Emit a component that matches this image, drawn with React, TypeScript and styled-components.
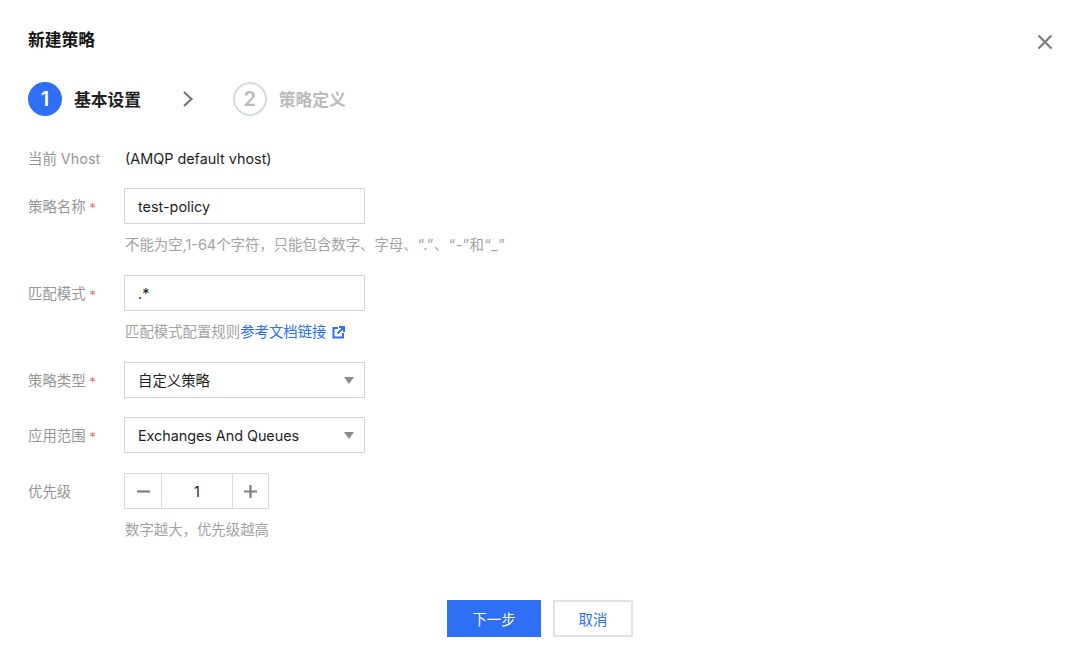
import { createGlobalStyle } from 'styled-components';
import styled from 'styled-components';

const GlobalStyle = createGlobalStyle`
  html, body {
    margin: 0;
    padding: 0;
    background: #fff;
  }
  body {
    font-family: Inter, "Noto Sans CJK SC", "Liberation Sans", sans-serif;
    font-size: 14.4px;
    color: #1f1f1f;
  }
  * {
    box-sizing: border-box;
  }
`;

const Dialog = styled.div`
  width: 1080px;
  height: 663px;
  padding: 28px 28px 0;
  display: flex;
  flex-direction: column;
  overflow: hidden;
`;

const Header = styled.div`
  height: 24px;
  display: flex;
  align-items: center;
  justify-content: space-between;
`;

const Title = styled.h2`
  margin: 0;
  font-size: 16.8px;
  font-weight: 700;
  line-height: 24px;
  color: #161616;
`;

const CloseButton = styled.button`
  width: 18px;
  height: 18px;
  margin-right: -2px;
  margin-top: 4px;
  padding: 0;
  border: none;
  background: none;
  color: #808080;
  display: flex;
`;

const Steps = styled.div`
  margin-top: 30px;
  height: 34px;
  display: flex;
  align-items: center;
`;

const StepCircle = styled.span<{ $active?: boolean }>`
  width: 34px;
  height: 34px;
  border-radius: 50%;
  display: flex;
  align-items: center;
  justify-content: center;
  font-size: 20px;
  font-weight: 600;
  color: ${p => (p.$active ? '#fff' : '#bbbbbb')};
  background: ${p => (p.$active ? '#2e6ff6' : '#fff')};
  border: ${p => (p.$active ? 'none' : '2px solid #d5dae4')};
`;

const StepName = styled.span<{ $active?: boolean }>`
  margin-left: 12px;
  font-size: 16.8px;
  font-weight: 600;
  color: ${p => (p.$active ? '#222' : '#bbbbbb')};
`;

const StepArrow = styled.span`
  margin: 0 37.5px 0 40px;
  display: flex;
  color: #777;
`;

const Form = styled.div`
  margin-top: 24px;
  display: flex;
  flex-direction: column;
`;

const Row = styled.div<{ $gap?: number }>`
  display: grid;
  grid-template-columns: 96px 241px;
  margin-top: ${p => p.$gap ?? 0}px;
`;

const Label = styled.div`
  height: 36px;
  padding-top: 1px;
  line-height: 36px;
  color: #969696;
  white-space: nowrap;
`;

const Required = styled.span`
  margin-left: 4px;
  font-size: 12.5px;
  color: #e86a6a;
  position: relative;
  top: 1px;
`;

const Control = styled.div`
  display: flex;
  flex-direction: column;
`;

const Value = styled.div`
  height: 36px;
  padding: 1px 0 0 1px;
  line-height: 36px;
  color: #1f1f1f;
  white-space: nowrap;
`;

const Field = styled.div`
  height: 36px;
  padding: 0 13px;
  border: 1px solid #ced4e0;
  background: #fff;
  display: flex;
  align-items: center;
  justify-content: space-between;
  color: #1f1f1f;
  white-space: nowrap;
`;

const CjkText = styled.span`
  margin-bottom: 2px;
`;

const LatinText = styled.span`
  letter-spacing: -0.05px;
`;

const Caret = styled.span`
  width: 0;
  height: 0;
  margin-right: -3px;
  border-left: 5.5px solid transparent;
  border-right: 5.5px solid transparent;
  border-top: 7px solid #8c8c8c;
`;

const Help = styled.div`
  margin-top: 10px;
  height: 22px;
  padding-left: 1px;
  line-height: 22px;
  color: #a3a3a3;
  white-space: nowrap;
`;

const Quoted = styled.span`
  letter-spacing: 0.5px;
`;

const DocLink = styled.a`
  color: #2e6ff6;
  text-decoration: none;
  display: inline-flex;
  align-items: center;
  gap: 5px;
`;

const Stepper = styled.div`
  width: 145px;
  height: 36px;
  display: grid;
  grid-template-columns: 36px 1fr 35px;
  border: 1px solid #d5dae4;
`;

const StepperButton = styled.div`
  display: flex;
  align-items: center;
  justify-content: center;
  color: #7f7f7f;
`;

const StepperValue = styled.div`
  display: flex;
  align-items: center;
  justify-content: center;
  border-left: 1px solid #d5dae4;
  border-right: 1px solid #d5dae4;
  color: #1f1f1f;
`;

const Footer = styled.div`
  margin-top: 59px;
  display: flex;
  justify-content: center;
  gap: 12px;
`;

const Button = styled.button<{ $primary?: boolean }>`
  height: 37px;
  width: ${p => (p.$primary ? 94 : 80)}px;
  padding: 0;
  font: inherit;
  color: ${p => (p.$primary ? '#fff' : '#2e6ff6')};
  background: ${p => (p.$primary ? '#2e6ff6' : '#fff')};
  border: ${p => (p.$primary ? '1px solid #2e6ff6' : '2px solid #dfe3ea')};
`;

export default function App() {
  return (
    <>
      <GlobalStyle />
      <Dialog>
        <Header>
          <Title>新建策略</Title>
          <CloseButton aria-label="关闭">
            <svg width="18" height="18" viewBox="0 0 18 18" fill="none" stroke="currentColor" strokeWidth="2.4">
              <path d="M2.5 2.5l13 13M15.5 2.5l-13 13" />
            </svg>
          </CloseButton>
        </Header>

        <Steps>
          <StepCircle $active>1</StepCircle>
          <StepName $active>基本设置</StepName>
          <StepArrow>
            <svg width="14" height="18" viewBox="0 0 14 18" fill="none" stroke="currentColor" strokeWidth="2.2">
              <path d="M3 2l7.5 7L3 16" />
            </svg>
          </StepArrow>
          <StepCircle>2</StepCircle>
          <StepName>策略定义</StepName>
        </Steps>

        <Form>
          <Row>
            <Label>当前 Vhost</Label>
            <Value>(AMQP default vhost)</Value>
          </Row>
          <Row $gap={12}>
            <Label>
              策略名称<Required>*</Required>
            </Label>
            <Control>
              <Field>test-policy</Field>
              <Help>
                不能为空,1-64个字符，只能包含数字、字母、<Quoted>“.”、“-”和“_”</Quoted>
              </Help>
            </Control>
          </Row>
          <Row $gap={19}>
            <Label>
              匹配模式<Required>*</Required>
            </Label>
            <Control>
              <Field>.*</Field>
              <Help>
                <span>匹配模式配置规则</span>
                <DocLink href="#">
                  参考文档链接
                  <svg width="13" height="13" viewBox="0 0 13 13" fill="none" stroke="currentColor" strokeWidth="2">
                    <path d="M6 2H1.5v9.5H11V7M7 1h5v5M12 1L5.5 7.5" />
                  </svg>
                </DocLink>
              </Help>
            </Control>
          </Row>
          <Row $gap={19}>
            <Label>
              策略类型<Required>*</Required>
            </Label>
            <Field>
              <CjkText>自定义策略</CjkText>
              <Caret />
            </Field>
          </Row>
          <Row $gap={19}>
            <Label>
              应用范围<Required>*</Required>
            </Label>
            <Field>
              <LatinText>Exchanges And Queues</LatinText>
              <Caret />
            </Field>
          </Row>
          <Row $gap={20}>
            <Label>优先级</Label>
            <Control>
              <Stepper>
                <StepperButton>
                  <svg width="13" height="13" viewBox="0 0 13 13" fill="none" stroke="currentColor" strokeWidth="2.2">
                    <path d="M0 6.5h13" />
                  </svg>
                </StepperButton>
                <StepperValue>1</StepperValue>
                <StepperButton>
                  <svg width="13" height="13" viewBox="0 0 13 13" fill="none" stroke="currentColor" strokeWidth="2.2">
                    <path d="M0 6.5h13M6.5 0v13" />
                  </svg>
                </StepperButton>
              </Stepper>
              <Help>数字越大，优先级越高</Help>
            </Control>
          </Row>
        </Form>

        <Footer>
          <Button $primary>下一步</Button>
          <Button>取消</Button>
        </Footer>
      </Dialog>
    </>
  );
}
